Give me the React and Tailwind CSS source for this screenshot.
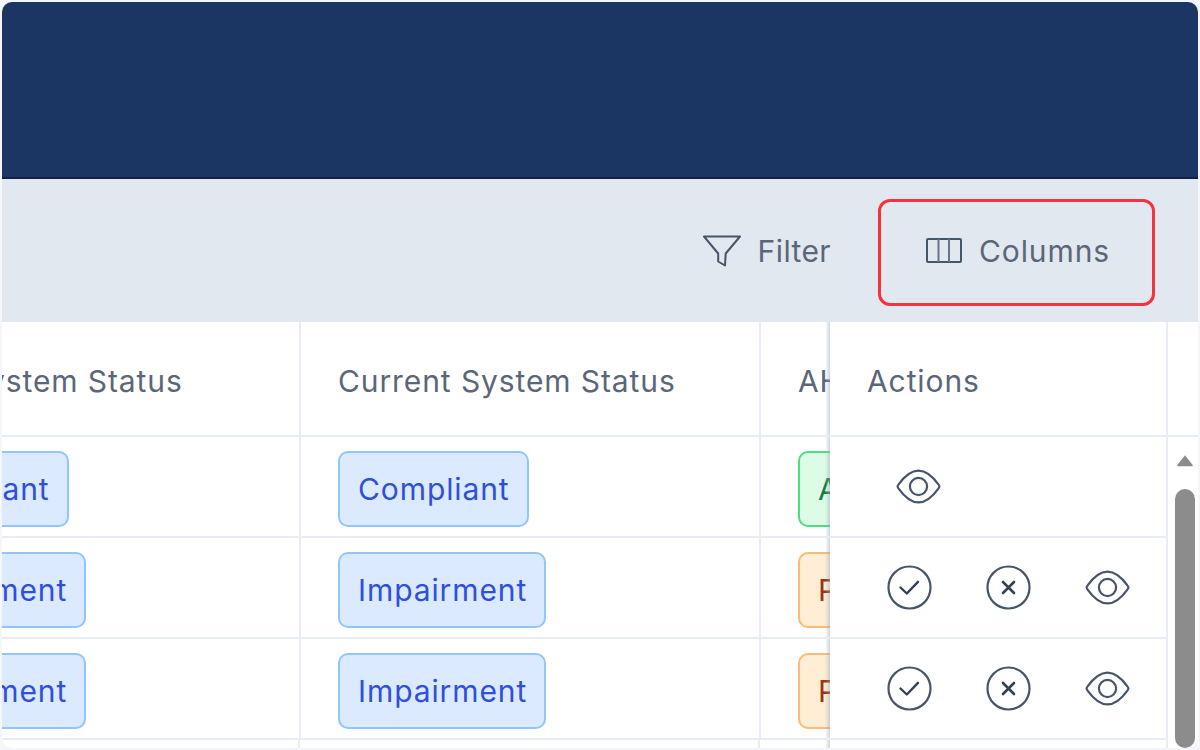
import React from "react";

const Eye = () => (
  <svg width="45" height="35" viewBox="0 0 45 35" fill="none" stroke="#475569" strokeWidth="2.2" className="block shrink-0">
    <path d="M1.6 17.5 Q1.6 16.6 2.6 15.4 C9 6.5 16 1.6 22.5 1.6 C29 1.6 36 6.5 42.4 15.4 Q43.4 16.6 43.4 17.5 Q43.4 18.4 42.4 19.6 C36 28.5 29 33.4 22.5 33.4 C16 33.4 9 28.5 2.6 19.6 Q1.6 18.4 1.6 17.5 Z" />
    <circle cx="22.5" cy="17.5" r="8.6" />
  </svg>
);

const Check = () => (
  <svg width="45" height="45" viewBox="0 0 45 45" fill="none" stroke="#475569" strokeWidth="2.2" className="block shrink-0">
    <circle cx="22.5" cy="22.5" r="21" />
    <path d="M13.5 22.5 L19.8 28.5 L31 16.8" stroke="#334155" strokeWidth="2.4" strokeLinecap="round" strokeLinejoin="round" />
  </svg>
);

const Cross = () => (
  <svg width="45" height="45" viewBox="0 0 45 45" fill="none" stroke="#475569" strokeWidth="2.2" className="block shrink-0">
    <circle cx="22.5" cy="22.5" r="21" />
    <path d="M17 17 L28 28 M28 17 L17 28" stroke="#334155" strokeWidth="2.6" strokeLinecap="round" />
  </svg>
);

const Pill = ({ tone, children }) => {
  const tones = {
    blue: "bg-[#dbeafe] border-[#93c5fd] text-[#2f4fdc]",
    green: "bg-[#dcfce7] border-[#4ade80] text-[#15803d]",
    orange: "bg-[#ffedd5] border-[#fdba74] text-[#9a3412]",
  };
  return (
    <span className={`mt-[4px] inline-flex h-[76px] items-center rounded-[10px] border-2 pr-[17px] pl-[18px] whitespace-nowrap ${tones[tone]}`}>
      {children}
    </span>
  );
};

const Shade = () => (
  <div className="absolute top-0 bottom-0 -left-[5px] w-[5px] bg-gradient-to-l from-[#94a3b8]/45 to-transparent" />
);

const rows = [
  { a: "Compliant", b: "Compliant", c: "Active", tone: "green", approve: false },
  { a: "Impairment", b: "Impairment", c: "Pending", tone: "orange", approve: true },
  { a: "Impairment", b: "Impairment", c: "Pending", tone: "orange", approve: true },
];

export default function App() {
  return (
    <div className="h-[750px] w-[1200px] overflow-hidden bg-[#f4f6fa] p-[2px] text-[30px] leading-none tracking-[0.9px] font-['Inter',sans-serif]">
      <div className="flex h-[746px] flex-col overflow-hidden rounded-[10px] bg-white">
        <div className="h-[177px] shrink-0 border-b-2 border-[#0f2347] bg-[#1c3664]" />

        <div className="flex h-[143px] shrink-0 items-center justify-end bg-[#e2e8f0] pr-[43px] text-[#5b6679]">
          <div className="mr-[47px] flex items-center gap-[17px]">
            <svg width="38" height="32" viewBox="0 0 38 32" fill="none" stroke="#475569" strokeWidth="2" strokeLinejoin="round" className="block">
              <path d="M1 1.5 H37 L22.7 18.5 L22 30.5 L15.2 26.5 V18.5 Z" />
            </svg>
            <span className="tracking-[0.4px]">Filter</span>
          </div>
          <div className="mt-[4px] flex h-[107px] w-[277px] items-center gap-[17px] rounded-[12px] border-[3px] border-[#f5333f] pb-[4px] pl-[45px]">
            <svg width="36" height="25" viewBox="0 0 36 25" fill="none" className="block">
              <rect x="1" y="1" width="34" height="23" rx="1" stroke="#475569" strokeWidth="2" />
              <path d="M12.5 1 V24 M23 1 V24" stroke="#64748b" strokeWidth="2" />
            </svg>
            <span>Columns</span>
          </div>
        </div>

        <div className="flex h-[115px] shrink-0 border-b-2 border-[#e8edf5] text-[#5b6679]">
          <div className="flex min-w-0 flex-1 overflow-hidden">
            <div className="-ml-[161px] flex">
              <div className="flex w-[460px] shrink-0 items-center border-r-2 border-[#e8edf5] pt-[4px] pl-[37px] whitespace-nowrap">Initial System Status</div>
              <div className="flex w-[460px] shrink-0 items-center border-r-2 border-[#e8edf5] pt-[4px] pl-[37px] whitespace-nowrap">Current System Status</div>
              <div className="flex w-[200px] shrink-0 items-center pt-[4px] pl-[37px] whitespace-nowrap">AHJ Status</div>
            </div>
          </div>
          <div className="relative z-10 flex w-[338px] shrink-0 items-center border-r-2 border-[#e8edf5] bg-white pt-[4px] pl-[37px]">
            <Shade />
            Actions
          </div>
          <div className="w-[30px] shrink-0" />
        </div>

        <div className="flex min-h-0 flex-1">
          <div className="relative min-w-0 flex-1 overflow-hidden">
            {rows.map((r, i) => (
              <div key={i} className="flex h-[101px] border-b-2 border-[#e8edf5]">
                <div className="flex min-w-0 flex-1 overflow-hidden">
                  <div className="-ml-[161px] flex">
                    <div className="flex w-[460px] shrink-0 items-center border-r-2 border-[#e8edf5] pl-[37px]">
                      <Pill tone="blue">{r.a}</Pill>
                    </div>
                    <div className="flex w-[460px] shrink-0 items-center border-r-2 border-[#e8edf5] pl-[37px]">
                      <Pill tone="blue">{r.b}</Pill>
                    </div>
                    <div className="flex w-[200px] shrink-0 items-center pl-[37px]">
                      <Pill tone={r.tone}>{r.c}</Pill>
                    </div>
                  </div>
                </div>
                <div className="relative z-10 flex w-[338px] shrink-0 items-center border-r-2 border-[#e8edf5] bg-white">
                  <Shade />
                  {r.approve ? (
                    <div className="flex items-center gap-[54px] pl-[57px]">
                      <Check />
                      <Cross />
                      <Eye />
                    </div>
                  ) : (
                    <div className="pl-[66px]">
                      <Eye />
                    </div>
                  )}
                </div>
              </div>
            ))}
            <div className="flex h-[12px]">
              <div className="flex min-w-0 flex-1 overflow-hidden">
                <div className="w-[298px] shrink-0 border-r-2 border-[#e8edf5]" />
                <div className="w-[460px] shrink-0 border-r-2 border-[#e8edf5]" />
              </div>
              <div className="relative z-10 w-[338px] shrink-0 border-r-2 border-[#e8edf5] bg-white">
                <Shade />
              </div>
            </div>
          </div>
          <div className="flex w-[30px] shrink-0 flex-col items-start pl-[7px] pt-[17px]">
            <svg width="20" height="16" viewBox="1 0 20 16" className="block">
              <path d="M11 1.5 L20.5 13.5 Q21 15 19.5 15 H2.5 Q1 15 1.5 13.5 Z" fill="#8c8c8c" />
            </svg>
            <div className="mt-[22px] h-[320px] w-[20px] rounded-full bg-[#8c8c8c]" />
          </div>
        </div>
      </div>
    </div>
  );
}
